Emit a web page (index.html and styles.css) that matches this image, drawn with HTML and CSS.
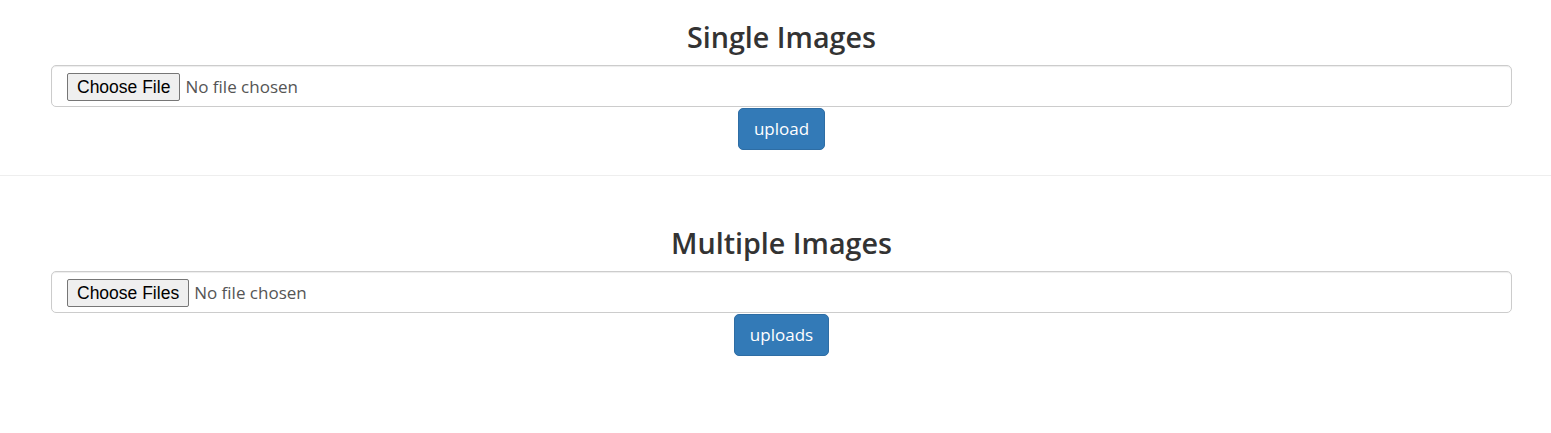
FILE: index.html
```html
<!DOCTYPE html>
<html lang="en">
<head>
<meta charset="utf-8">
<title>Upload Images</title>
<link rel="stylesheet" href="styles.css">
</head>
<body>
  <section class="upload-section first">
    <h3 class="section-title">Single Images</h3>
    <form class="upload-form">
      <input class="form-control" type="file" name="image">
      <button class="btn btn-primary" type="button">upload</button>
    </form>
  </section>
  <hr class="divider">
  <section class="upload-section second">
    <h3 class="section-title">Multiple Images</h3>
    <form class="upload-form">
      <input class="form-control" type="file" name="images" multiple>
      <button class="btn btn-primary" type="button">uploads</button>
    </form>
  </section>
</body>
</html>
```
FILE: styles.css
```css
* { box-sizing: border-box; }
html, body { margin: 0; padding: 0; background: #fff; }
body {
  font-family: "Open Sans", "Noto Sans", sans-serif;
  font-size: 17.5px;
  color: #333;
  width: 1551px;
}
.upload-section {
  margin: 0 39px 0 51px;
}
.upload-section.first { padding-top: 19px; }
.upload-section.second { padding-top: 49px; }
.section-title {
  margin: 0 0 10px;
  font-size: 28.7px;
  font-weight: 600;
  line-height: 36px;
  text-align: center;
  color: #333;
}
.upload-form {
  display: flex;
  flex-direction: column;
  align-items: center;
}
.form-control {
  display: block;
  width: 100%;
  height: 42px;
  margin: 0;
  padding: 7px 15px;
  font-family: "Open Sans", sans-serif;
  font-size: 17px;
  line-height: 26px;
  color: #555;
  background: #fff;
  border: 1px solid #ccc;
  border-radius: 5px;
  box-shadow: inset 0 1px 1px rgba(0,0,0,.075);
}
.form-control::file-selector-button {
  font-family: "Liberation Sans", Arial, sans-serif;
  font-size: 17.5px;
  color: #000;
  background: #efefef;
  border: 1px solid #767676;
  border-radius: 2px;
  height: 28px;
  padding: 0 9px;
  margin: 0 5px 0 0;
}
.btn {
  display: inline-block;
  margin-top: 1px;
  height: 42px;
  padding: 0 15px;
  font-family: "Open Sans", sans-serif;
  font-size: 17px;
  line-height: 40px;
  border-radius: 5px;
  cursor: pointer;
}
.btn-primary {
  color: #fff;
  background: #337ab7;
  border: 1px solid #2e6da4;
}
.divider {
  margin: 25px 0 0;
  border: 0;
  border-top: 1px solid #eee;
  height: 0;
}
```
